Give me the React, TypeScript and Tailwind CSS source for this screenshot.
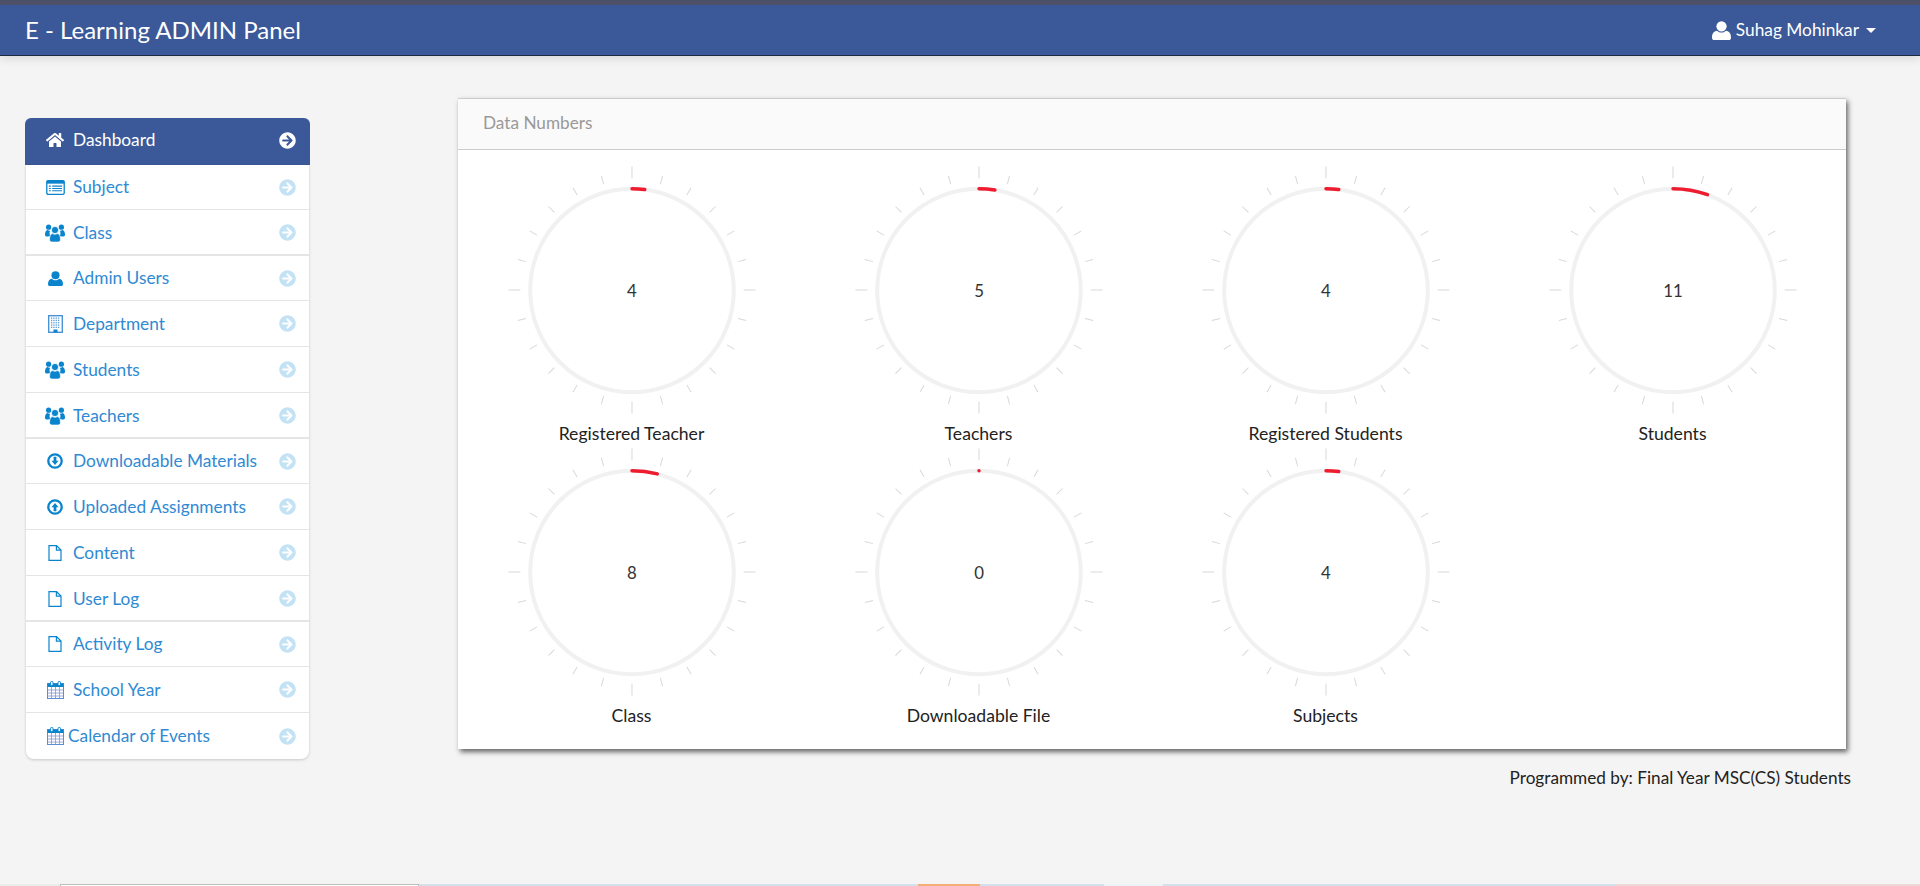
import { FaArrowCircleRight, FaHome } from "react-icons/fa";
import type { ReactNode } from "react";

function ListAltIcon() {
  return (
    <svg viewBox="0 0 20 16" className="h-[15px] w-[19px]">
      <rect x="0.7" y="0.7" width="18.6" height="14.6" rx="1.5" fill="#fff" stroke="#0a84cc" strokeWidth="1.4" />
      <rect x="0.7" y="0.7" width="18.6" height="3.2" fill="#0a84cc" />
      <path d="M3 6.5h2M3 9h2M3 11.5h2M6.5 6.5h10.5M6.5 9h10.5M6.5 11.5h10.5" stroke="#0a84cc" strokeWidth="1.2" />
    </svg>
  );
}

function CalendarIcon() {
  return (
    <svg viewBox="0 0 17 18" className="h-[18px] w-[17px]">
      <rect x="0.5" y="2.5" width="16" height="15" fill="#fff" stroke="#5a8fd0" />
      <rect x="0.5" y="2.5" width="16" height="3.5" fill="#0a84cc" />
      <rect x="3.5" y="0.5" width="2.5" height="4" rx="1" fill="#fff" stroke="#0a84cc" />
      <rect x="11" y="0.5" width="2.5" height="4" rx="1" fill="#fff" stroke="#0a84cc" />
      <path d="M4.5 6v11M8.5 6v11M12.5 6v11M1 9h15M1 12h15M1 15h15" stroke="#8f9fd8" strokeWidth="0.9" />
    </svg>
  );
}

function UserIcon({ className }: { className: string }) {
  return (
    <svg viewBox="0 0 20 20" className={className} fill="currentColor">
      <circle cx="10" cy="5.6" r="5.4" />
      <path d="M0 17.5C0 13 2 10.6 5.2 10.2 6.8 11.6 8.2 12.2 10 12.2s3.2-.6 4.8-2C18 10.6 20 13 20 17.5 20 19 19 20 17.5 20h-15C1 20 0 19 0 17.5Z" />
    </svg>
  );
}

function UsersIcon() {
  return (
    <svg viewBox="0 0 20 18" className="h-[18px] w-[20px]" fill="#0a84cc">
      <circle cx="3.6" cy="3.2" r="2.6" />
      <circle cx="16.4" cy="3.2" r="2.6" />
      <path d="M0 11c0-3 .8-4.8 2.6-5 .6.5 1.6.9 2.4.8-.5 1.2-.6 2.6-.3 3.8.2.6.5 1.2 1 1.7C3.6 12.4 0 13 0 11ZM20 11c0-3-.8-4.8-2.6-5-.6.5-1.6.9-2.4.8.5 1.2.6 2.6.3 3.8-.2.6-.5 1.2-1 1.7 2.1.1 5.7.7 5.7-1.3Z" />
      <circle cx="10" cy="6" r="3.6" stroke="#fff" strokeWidth="0.8" />
      <path d="M4.6 15.5c0-3.6 1-5.6 3-5.9 1.5 1 3.3 1 4.8 0 2 .3 3 2.3 3 5.9 0 1.6-1 2.5-2.4 2.5H7c-1.4 0-2.4-.9-2.4-2.5Z" stroke="#fff" strokeWidth="0.6" />
    </svg>
  );
}

function BuildingIcon() {
  const dots = [];
  for (let row = 0; row < 5; row++) {
    for (let col = 0; col < 4; col++) {
      dots.push(<rect key={`${row}-${col}`} x={3 + col * 2.3} y={2.5 + row * 2.3} width="1.3" height="1.3" fill="#5a9bd8" />);
    }
  }
  return (
    <svg viewBox="0 0 15 18" className="h-[18px] w-[15px]">
      <rect x="0.7" y="0.7" width="13.6" height="16.6" fill="#fff" stroke="#4a94d6" strokeWidth="1.4" />
      {dots}
      <rect x="5.5" y="14.5" width="4" height="3" fill="#0a84cc" />
    </svg>
  );
}

function CircleArrowIcon({ up }: { up?: boolean }) {
  return (
    <svg viewBox="0 0 16 16" className="h-[16px] w-[16px]">
      <circle cx="8" cy="8" r="6.7" fill="none" stroke="#0a84cc" strokeWidth="2.3" />
      <path
        d="M6.6 3.8h2.8v4h2.1L8 12 4.5 7.8h2.1Z"
        fill="#0a84cc"
        transform={up ? "rotate(180 8 8)" : undefined}
      />
    </svg>
  );
}

function FileIcon() {
  return (
    <svg viewBox="0 0 14 16" className="h-[16px] w-[14px]" fill="none" stroke="#0a84cc" strokeWidth="1.2">
      <path d="M1 .7h7.6L13 5v10.3H1Z" />
      <path d="M8.4.7V5.2H13" />
    </svg>
  );
}

type MenuItem = { label: string; icon: ReactNode; height: string; tight?: boolean };

const menu: MenuItem[] = [
  { label: "Subject", icon: <ListAltIcon />, height: "h-[45px]" },
  { label: "Class", icon: <UsersIcon />, height: "h-[46px] border-b-2 pt-[1px]" },
  { label: "Admin Users", icon: <UserIcon className="h-[15px] w-[15px] text-[#0a84cc]" />, height: "h-[45px]" },
  { label: "Department", icon: <BuildingIcon />, height: "h-[46px]" },
  { label: "Students", icon: <UsersIcon />, height: "h-[46px]" },
  { label: "Teachers", icon: <UsersIcon />, height: "h-[46px] border-b-2 pt-[1px]" },
  { label: "Downloadable Materials", icon: <CircleArrowIcon />, height: "h-[45px]" },
  { label: "Uploaded Assignments", icon: <CircleArrowIcon up />, height: "h-[46px]" },
  { label: "Content", icon: <FileIcon />, height: "h-[46px]" },
  { label: "User Log", icon: <FileIcon />, height: "h-[46px] border-b-2 pt-[1px]" },
  { label: "Activity Log", icon: <FileIcon />, height: "h-[45px]" },
  { label: "School Year", icon: <CalendarIcon />, height: "h-[46px]" },
  { label: "Calendar of Events", icon: <CalendarIcon />, height: "h-[46px]", tight: true },
];

const gauges = [
  { label: "Registered Teacher", value: 4 },
  { label: "Teachers", value: 5 },
  { label: "Registered Students", value: 4 },
  { label: "Students", value: 11 },
  { label: "Class", value: 8 },
  { label: "Downloadable File", value: 0 },
  { label: "Subjects", value: 4 },
];

function Gauge({ label, value }: { label: string; value: number }) {
  const ticks = Array.from({ length: 24 }, (_, i) => i * 15);
  // one full turn is 200 units
  const angle = (value / 200) * 2 * Math.PI;
  const endX = 130 + 103 * Math.sin(angle);
  const endY = 130 - 103 * Math.cos(angle);

  return (
    <div className="flex h-[282px] flex-col items-center">
      <svg viewBox="0 0 260 260" className="h-[260px] w-[260px]">
        <circle cx="130" cy="130" r="103" fill="none" stroke="#f1f1f1" strokeWidth="4" />
        {ticks.map((deg) => (
          <line
            key={deg}
            x1="130"
            y1={deg % 90 === 0 ? 16.5 : 18.5}
            x2="130"
            y2={deg % 90 === 0 ? 4.5 : 10}
            stroke="#d8d8d8"
            strokeWidth="1"
            transform={`rotate(${deg} 130 129.5)`}
          />
        ))}
        <path
          d={`M130 27 A103 103 0 0 1 ${endX} ${endY}`}
          fill="none"
          stroke="#ee1c2e"
          strokeWidth="3.5"
          strokeLinecap="round"
        />
        <text x="130" y="137" textAnchor="middle" fontSize="17" fill="#333">
          {value}
        </text>
      </svg>
      <div className="mt-[5px] text-[17.6px] leading-[20px] text-[#222]">{label}</div>
    </div>
  );
}

export default function App() {
  return (
    <div className="flex h-[886px] flex-col overflow-hidden bg-[#f4f4f4] font-['Lato','Open_Sans',sans-serif]">
      <header className="flex h-[56px] items-center justify-between border-t-[5px] border-b border-t-[#4e5068] border-b-[#1e2a44] bg-[#3b5998] pl-[25px] pr-[44px] shadow-[0_2px_10px_rgba(0,0,0,0.12)]">
        <span className="text-[24px] text-white">E - Learning ADMIN Panel</span>
        <div className="flex items-center text-[17.3px] text-white">
          <UserIcon className="mr-[5px] h-[19px] w-[19px]" />
          <span>Suhag Mohinkar</span>
          <span className="ml-[7px] h-0 w-0 border-x-[5px] border-t-[5px] border-x-transparent border-t-white" />
        </div>
      </header>

      <div className="flex flex-1 items-start pt-[42px]">
        <nav className="ml-[25px] mt-[20px] w-[285px]">
          <div className="flex h-[47px] items-center rounded-t-[6px] bg-[#3b5998] pb-[3px] pl-[20px] pr-[14px] text-white">
            <span className="mr-[8px] flex w-[20px] shrink-0 items-center justify-center">
              <FaHome className="text-[18px]" />
            </span>
            <span className="text-[17.3px]">Dashboard</span>
            <FaArrowCircleRight className="ml-auto text-[17px]" />
          </div>
          <div className="mx-px overflow-hidden rounded-b-[8px] bg-white shadow-[0_1px_3px_rgba(0,0,0,0.18)]">
            {menu.map((item) => (
              <div
                key={item.label}
                className={`flex items-center border-b border-[#e5e5e5] pl-[19px] pr-[13px] last:border-b-0 ${item.height}`}
              >
                <span className={`flex w-[20px] shrink-0 items-center justify-center ${item.tight ? "mr-[3px]" : "mr-[8px]"}`}>
                  {item.icon}
                </span>
                <span className="text-[17.3px] text-[#2f8ad3]">{item.label}</span>
                <FaArrowCircleRight className="ml-auto text-[17px] text-[#c3e2f4]" />
              </div>
            ))}
          </div>
        </nav>

        <main className="ml-[148px] w-[1388px]">
          <section className="bg-white shadow-[2px_3px_5px_#666]">
            <div className="flex h-[52px] items-center border-t border-b border-[#ccc] bg-[#fafafa] pb-[3px] pl-[25px] text-[17.2px] text-[#999]">
              Data Numbers
            </div>
            <div className="grid grid-cols-4 pb-[23px] pt-[12px]">
              {gauges.map((g) => (
                <Gauge key={g.label} label={g.label} value={g.value} />
              ))}
            </div>
          </section>
          <p className="mr-[-5px] mt-[16px] text-right text-[17.2px] text-[#222]">
            Programmed by: Final Year MSC(CS) Students
          </p>
        </main>
      </div>

      <div className="flex h-[2px] shrink-0">
        <div className="w-[60px] bg-[#ececec]" />
        <div className="w-[359px] border-x border-t border-[#bdbdbd] bg-white" />
        <div className="w-[499px] bg-[#d5e1ea]" />
        <div className="w-[62px] bg-[#f5ae73]" />
        <div className="w-[124px] bg-[#d5e1ea]" />
        <div className="w-[59px] bg-[#eef3f6]" />
        <div className="w-[453px] bg-[#d5e1ea]" />
        <div className="flex-1 bg-[#ecd7d9]" />
      </div>
    </div>
  );
}
